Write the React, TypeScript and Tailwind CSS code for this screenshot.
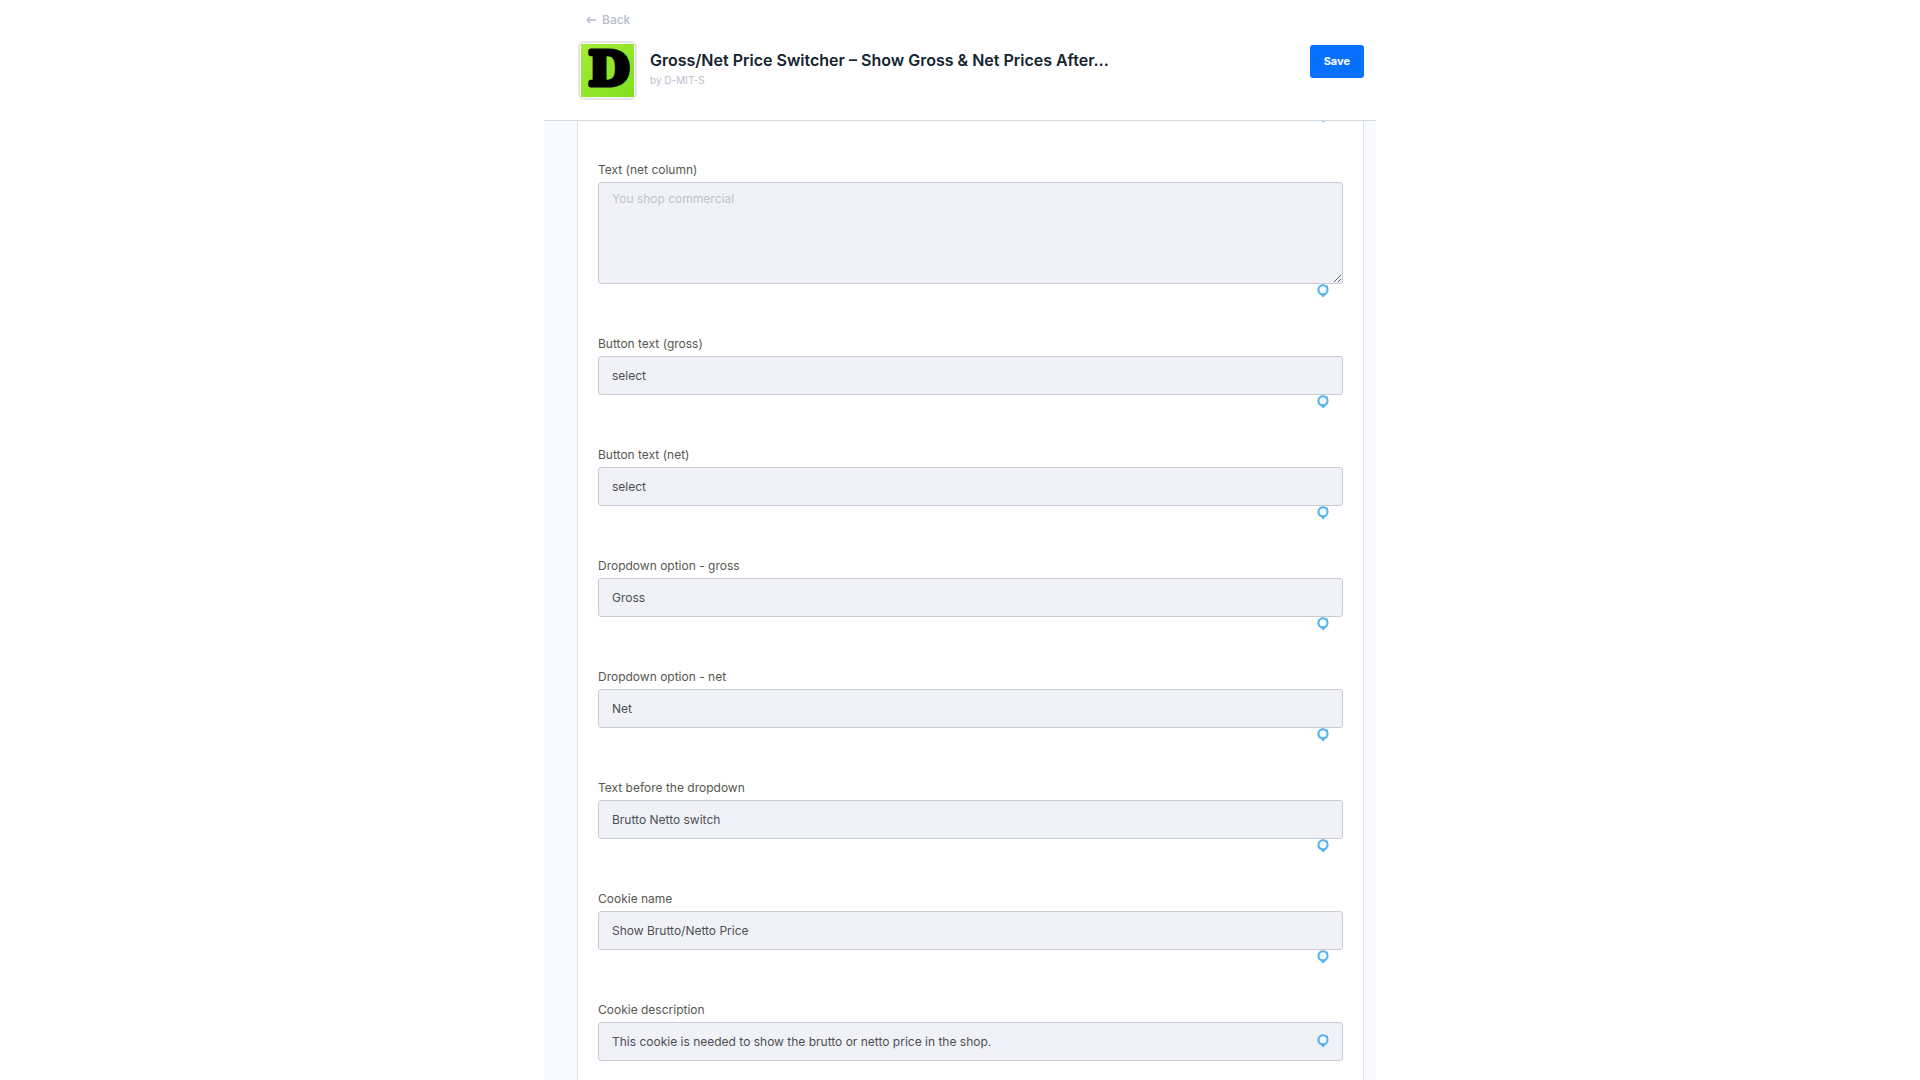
import clsx from 'clsx';

interface Field {
  id: string;
  label: string;
  value?: string;
  placeholder?: string;
  multiline?: boolean;
  markInside?: boolean;
}

const fields: Field[] = [
  { id: 'text_net', label: 'Text (net column)', placeholder: 'You shop commercial', multiline: true },
  { id: 'button_gross', label: 'Button text (gross)', value: 'select' },
  { id: 'button_net', label: 'Button text (net)', value: 'select' },
  { id: 'option_gross', label: 'Dropdown option - gross', value: 'Gross' },
  { id: 'option_net', label: 'Dropdown option - net', value: 'Net' },
  { id: 'dropdown_text', label: 'Text before the dropdown', value: 'Brutto Netto switch' },
  { id: 'cookie_name', label: 'Cookie name', value: 'Show Brutto/Netto Price' },
  {
    id: 'cookie_description',
    label: 'Cookie description',
    value: 'This cookie is needed to show the brutto or netto price in the shop.',
    markInside: true,
  },
];

function BackArrow() {
  return (
    <svg width="10" height="8" viewBox="0 0 10 8" fill="none" stroke="currentColor" strokeWidth="1.3" aria-hidden="true">
      <path d="M9.5 4H1M3.8 1.2 1 4l2.8 2.8" strokeLinecap="round" strokeLinejoin="round" />
    </svg>
  );
}

function Logo() {
  return (
    <div className="size-[59px] shrink-0 rounded-md border-2 border-[#e3e7e3] bg-white p-px">
      <svg viewBox="0 0 53 53" className="size-full overflow-visible" aria-hidden="true">
        <defs>
          <linearGradient id="lime" x1="0" y1="0" x2="1" y2="1">
            <stop offset="0" stopColor="#a5ec38" />
            <stop offset="1" stopColor="#7fe01c" />
          </linearGradient>
        </defs>
        <rect width="53" height="53" fill="url(#lime)" />
        <text
          x="28"
          y="41"
          textAnchor="middle"
          fontFamily="'DejaVu Serif', serif"
          fontWeight="700"
          fontSize="47"
          stroke="#000"
          strokeWidth="5"
          strokeLinejoin="round"
        >
          D
        </text>
      </svg>
    </div>
  );
}

function Mark({ className }: { className?: string }) {
  return (
    <svg width="12" height="14" viewBox="0 0 12 14" className={className} aria-hidden="true">
      <path d="M6 .3C7.2.3 8.2.6 9 1.2L10.8 1.4 10.9 3.2C11.5 4.2 11.7 5.2 11.5 6.4 11.2 8.4 10 10 8.4 11L6.2 13.4 3.8 11C1.6 10.2.4 8.4.4 6.2.4 2.9 2.8.3 6 .3Z" fill="#58b3ef" />
      <circle cx="6" cy="5.8" r="3.5" fill="#f4fbff" />
    </svg>
  );
}

function FormField({ id, label, value, placeholder, multiline, markInside }: Field) {
  const control =
    'block w-full rounded-[3px] border border-[#c9ccd5] bg-[#f1f2f8] px-[13px] text-xs text-[#4b4f55] placeholder:text-[#bfc2ca] focus:border-[#0870ff] focus:outline-none';

  return (
    <div>
      <label htmlFor={id} className="block text-xs text-[#56584f]">
        {label}
      </label>
      <div className="relative mt-1">
        {multiline ? (
          <textarea id={id} placeholder={placeholder} className={clsx(control, 'h-[102px] resize-y py-2')} />
        ) : (
          <input id={id} type="text" defaultValue={value} className={clsx(control, 'h-[39px]')} />
        )}
        <Mark className={clsx('absolute right-3.5', markInside ? 'top-3' : 'top-full')} />
      </div>
    </div>
  );
}

export default function App() {
  return (
    <div className="h-screen overflow-hidden bg-white font-['Inter',sans-serif]">
      <div className="mx-auto flex h-full max-w-[832px] flex-col">
        <header className="shrink-0 border-b border-[#d5d9e0] pt-3 pr-3 pb-5 pl-[34px]">
          <a href="#" className="ml-2 flex w-fit items-center gap-1.5 text-xs font-medium text-[#b4bdcb]">
            <BackArrow />
            Back
          </a>
          <div className="mt-[13px] flex items-start">
            <Logo />
            <div className="mt-[9px] ml-[13px] min-w-0 flex-1">
              <h1 className="truncate text-base leading-5 font-semibold text-[#14232f]">
                Gross/Net Price Switcher – Show Gross &amp; Net Prices After...
              </h1>
              <p className="mt-0.5 text-[10px] leading-4 text-[#b9c0cc]">by D-MIT-S</p>
            </div>
            <button type="button" className="mt-1 h-[33px] rounded-[3px] bg-[#0870ff] px-[14px] text-[11px] font-bold text-white">
              Save
            </button>
          </div>
        </header>

        <main className="min-h-0 flex-1 overflow-hidden bg-[#f9faff] pr-3 pl-[33px]">
          <div className="min-h-full border-x border-[#dfe1ea] bg-white px-5">
            <div className="flex h-[41px] justify-end pr-3.5">
              <Mark className="-mt-3" />
            </div>
            <form className="space-y-[52px] pb-5">
              {fields.map((field) => (
                <FormField key={field.id} {...field} />
              ))}
            </form>
          </div>
        </main>
      </div>
    </div>
  );
}
